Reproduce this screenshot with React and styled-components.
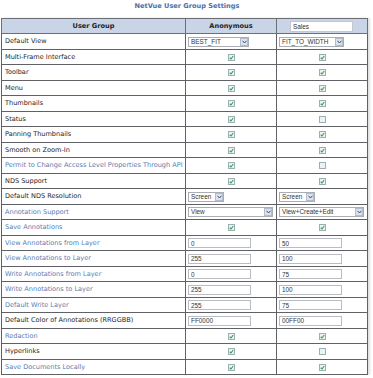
import styled, { createGlobalStyle } from "styled-components";

const GlobalStyle = createGlobalStyle`
    body {
        margin: 0;
        background: #ffffff;
        font-family: "DejaVu Sans", Verdana, sans-serif;
    }
`

const rows = [
    { label: "Default View", kind: "select", anon: "BEST_FIT", sales: "FIT_TO_WIDTH", w: [61, 65] },
    { label: "Multi-Frame Interface", kind: "check", anon: true, sales: true },
    { label: "Toolbar", kind: "check", anon: true, sales: true },
    { label: "Menu", kind: "check", anon: true, sales: true },
    { label: "Thumbnails", kind: "check", anon: true, sales: true },
    { label: "Status", kind: "check", anon: true, sales: false },
    { label: "Panning Thumbnails", kind: "check", anon: true, sales: true },
    { label: "Smooth on Zoom-In", kind: "check", anon: true, sales: true },
    { label: "Permit to Change Access Level Properties Through API", link: true, kind: "check", anon: true, sales: false },
    { label: "NDS Support", kind: "check", anon: true, sales: true },
    { label: "Default NDS Resolution", kind: "select", anon: "Screen", sales: "Screen", w: [36, 36] },
    { label: "Annotation Support", link: true, kind: "select", anon: "View", sales: "View+Create+Edit", w: [85, 85] },
    { label: "Save Annotations", link: true, kind: "check", anon: true, sales: true },
    { label: "View Annotations from Layer", link: true, kind: "text", anon: "0", sales: "50" },
    { label: "View Annotations to Layer", link: true, kind: "text", anon: "255", sales: "100" },
    { label: "Write Annotations from Layer", link: true, kind: "text", anon: "0", sales: "75" },
    { label: "Write Annotations to Layer", link: true, kind: "text", anon: "255", sales: "100" },
    { label: "Default Write Layer", link: true, kind: "text", anon: "255", sales: "75" },
    { label: "Default Color of Annotations (RRGGBB)", kind: "text", anon: "FF0000", sales: "00FF00" },
    { label: "Redaction", link: true, kind: "check", anon: true, sales: true },
    { label: "Hyperlinks", kind: "check", anon: true, sales: false },
    { label: "Save Documents Locally", link: true, kind: "check", anon: true, sales: true },
];

function Check({ checked }) {
    return (
        <CheckBox>
            {checked && (
                <svg width="5" height="5" viewBox="0 0 10 10">
                    <path d="M1.5 5.5 L4 8 L8.5 2" fill="none" stroke="#3f9a5a" strokeWidth="2.2" />
                </svg>
            )}
        </CheckBox>
    )
}

function Dropdown({ value, width }) {
    return (
        <SelectWrap style={{ width }}>
            <Select defaultValue={value}>
                <option>{value}</option>
            </Select>
            <Arrow>
                <svg width="5" height="4" viewBox="0 0 10 8">
                    <path d="M1 1.5 L5 6 L9 1.5" fill="none" stroke="#3a4a6a" strokeWidth="2" />
                </svg>
            </Arrow>
        </SelectWrap>
    )
}

function Cell({ row, value, idx }) {
    if (row.kind === "check") {
        return <CenterCell><Check checked={value} /></CenterCell>
    }
    if (row.kind === "select") {
        return <ControlCell><Dropdown value={value} width={row.w[idx]} /></ControlCell>
    }
    return <ControlCell><TextInput defaultValue={value} /></ControlCell>
}

export default function App() {
    return (
        <>
            <GlobalStyle />
            <Page>
                <Title>NetVue User Group Settings</Title>
                <Table>
                    <colgroup>
                        <col style={{ width: 184 }} />
                        <col style={{ width: 91 }} />
                        <col style={{ width: 91 }} />
                    </colgroup>
                    <thead>
                        <tr>
                            <Head>User Group</Head>
                            <Head>Anonymous</Head>
                            <Head><GroupName defaultValue="Sales" /></Head>
                        </tr>
                    </thead>
                    <tbody>
                        {rows.map((row) => (
                            <Row key={row.label}>
                                <Label link={row.link}>{row.label}</Label>
                                <Cell row={row} value={row.anon} idx={0} />
                                <Cell row={row} value={row.sales} idx={1} />
                            </Row>
                        ))}
                    </tbody>
                </Table>
            </Page>
        </>
    )
}

const Page = styled.div`
    padding: 0 0 0 1px;
    width: 372px;
`

const Title = styled.div`
    height: 18px;
    line-height: 13px;
    text-align: center;
    font-size: 6.6px;
    font-weight: bold;
    color: #4d6fa6;
`

const Table = styled.table`
    width: 366px;
    table-layout: fixed;
    border-collapse: collapse;
    box-shadow: 2px 0 2px rgba(0, 0, 0, 0.12);
`

const Head = styled.th`
    height: 14.4px;
    padding: 0;
    background: #c9d5e6;
    border: 1px solid #6b6f76;
    font-size: 6.6px;
    line-height: 1;
    font-weight: bold;
    color: #1e1e1e;
    text-align: center;
`

const Row = styled.tr`
    height: 15.5px;
`

const Label = styled.td`
    padding: 0 0 0 3px;
    border: 1px solid #5f6166;
    font-size: 6.55px;
    line-height: 1;
    color: ${props => props.link ? "#5a7cb2" : "#262626"};
    white-space: nowrap;
    overflow: hidden;
`

const CenterCell = styled.td`
    padding: 0;
    border: 1px solid #5f6166;
    font-size: 0;
    line-height: 0;
    text-align: center;
    vertical-align: middle;
`

const ControlCell = styled.td`
    padding: 0 0 0 2px;
    border: 1px solid #5f6166;
    font-size: 0;
    line-height: 0;
    vertical-align: middle;
`

const CheckBox = styled.span`
    display: inline-flex;
    align-items: center;
    justify-content: center;
    box-sizing: border-box;
    width: 7px;
    height: 7px;
    border: 1px solid #9ab0b4;
    background: #eef3ef;
    vertical-align: middle;
`

const inputFont = `
    font-family: "Liberation Sans", Arial, sans-serif;
    font-size: 6.4px;
    line-height: 8px;
    color: #333333;
`

const TextInput = styled.input`
    display: block;
    box-sizing: border-box;
    width: 63px;
    height: 10px;
    margin: 0;
    padding: 0 0 0 2px;
    border: 1px solid #b9bcc2;
    background: #ffffff;
    ${inputFont}
`

const GroupName = styled(TextInput)`
    width: 63px;
    height: 11px;
    margin: 0 0 0 13px;
    border-color: #c4c8ce;
`

const SelectWrap = styled.div`
    position: relative;
    height: 10px;
`

const Select = styled.select`
    appearance: none;
    display: block;
    box-sizing: border-box;
    width: 100%;
    height: 10px;
    margin: 0;
    padding: 0 0 0 2px;
    border: 1px solid #a9adb4;
    border-radius: 0;
    background: #ffffff;
    ${inputFont}
`

const Arrow = styled.span`
    position: absolute;
    top: 1px;
    right: 1px;
    width: 8px;
    height: 8px;
    box-sizing: border-box;
    display: flex;
    align-items: center;
    justify-content: center;
    background: #dde3ee;
    border: 1px solid #b3bccb;
    pointer-events: none;
`
